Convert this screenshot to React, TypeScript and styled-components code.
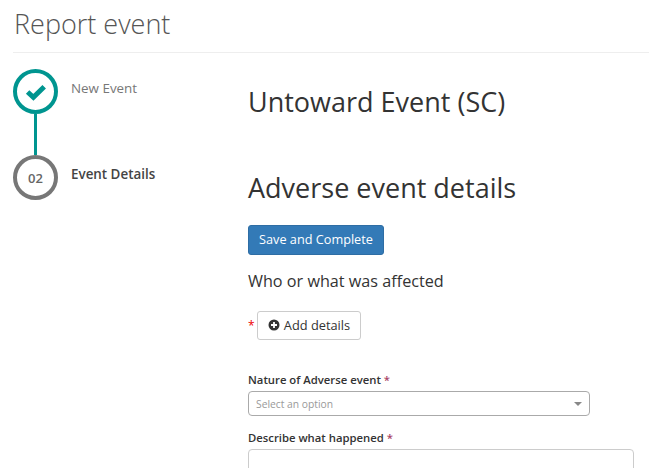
import React from "react"
import styled, { createGlobalStyle } from "styled-components"

const GlobalStyle = createGlobalStyle`
  html, body {
    margin: 0;
    padding: 0;
    height: 100%;
    overflow: hidden;
    background: #fff;
    font-family: "Open Sans", "Liberation Sans", sans-serif;
    color: #333;
  }
  * { box-sizing: border-box; }
`

const Page = styled.div`
  width: 649px;
  height: 468px;
  overflow: hidden;
  padding-left: 13px;
`

const PageHeader = styled.header`
  height: 53px;
  border-bottom: 1px solid #eee;
  padding: 6px 0 0 1px;
`

const PageTitle = styled.h1`
  margin: 0;
  font-size: 27px;
  line-height: 36px;
  font-weight: 300;
  color: #555;
`

const Body = styled.div`
  display: flex;
`

const Stepper = styled.ol`
  list-style: none;
  margin: 16px 0 0;
  padding: 0;
  width: 235px;
  flex: none;
`

const Step = styled.li`
  display: flex;
  gap: 13px;
`

const Track = styled.div`
  display: flex;
  flex-direction: column;
  align-items: center;
  width: 45px;
`

const Circle = styled.div<{ $done?: boolean }>`
  width: 45px;
  height: 45px;
  border-radius: 50%;
  border: 4px solid ${({ $done }) => ($done ? "#009590" : "#777")};
  color: ${({ $done }) => ($done ? "#009590" : "#666")};
  display: flex;
  align-items: center;
  justify-content: center;
  font-size: 13px;
  font-weight: 600;
`

const Connector = styled.div`
  width: 3px;
  height: 41px;
  background: #009590;
`

const StepLabel = styled.span<{ $active?: boolean }>`
  font-size: 13.4px;
  line-height: 20px;
  margin-top: 9px;
  font-weight: ${({ $active }) => ($active ? 600 : 400)};
  color: ${({ $active }) => ($active ? "#444" : "#777")};
`

const Main = styled.main`
  flex: 1;
  min-width: 0;
`

const EventTitle = styled.h2`
  margin: 31px 0 0;
  font-size: 27px;
  line-height: 36px;
  font-weight: 400;
  color: #333;
`

const SectionTitle = styled.h2`
  margin: 50px 0 0;
  font-size: 27px;
  line-height: 36px;
  font-weight: 400;
  color: #333;
`

const PrimaryButton = styled.button`
  display: block;
  margin-top: 19px;
  width: 136px;
  height: 30px;
  padding: 0 0 2px;
  background: #337ab7;
  border: 1px solid #2e6da4;
  border-radius: 3px;
  color: #fff;
  font: 400 12.7px "Open Sans", sans-serif;
`

const Subheading = styled.h3`
  margin: 14px 0 0;
  font-size: 16.2px;
  line-height: 24px;
  font-weight: 400;
  color: #333;
`

const RequiredRow = styled.div`
  display: flex;
  align-items: center;
  gap: 3px;
  margin-top: 18px;
`

const Asterisk = styled.span`
  color: #e00;
  font-size: 12px;
  width: 6px;
`

const DefaultButton = styled.button`
  display: flex;
  align-items: center;
  justify-content: center;
  gap: 4px;
  width: 104px;
  height: 29px;
  padding: 0 0 1px;
  background: #fff;
  border: 1px solid #ccc;
  border-radius: 3px;
  color: #333;
  font: 400 12.8px "Open Sans", sans-serif;
`

const Field = styled.div<{ $gap: number }>`
  margin-top: ${({ $gap }) => $gap}px;
`

const FieldLabel = styled.label`
  display: block;
  font-size: 11.3px;
  line-height: 16px;
  font-weight: 600;
  color: #333;
  margin-bottom: 3px;

  span {
    color: #a94466;
  }
`

const Select = styled.div`
  display: flex;
  align-items: center;
  justify-content: space-between;
  width: 342px;
  height: 25px;
  padding: 1px 7px 0;
  border: 1px solid #aaa;
  border-radius: 4px;
  font-size: 10.3px;
  color: #999;
`

const Caret = styled.i`
  width: 0;
  height: 0;
  border-left: 4px solid transparent;
  border-right: 4px solid transparent;
  border-top: 4px solid #888;
`

const TextArea = styled.div`
  width: 386px;
  height: 60px;
  border: 1px solid #ccc;
  border-radius: 4px;
`

const CheckIcon = () => (
  <svg width="22" height="18" viewBox="0 0 22 18">
    <path d="M2.6 9 L8.4 14.4 L19.2 3.8" fill="none" stroke="currentColor" strokeWidth="5" />
  </svg>
)

const PlusCircleIcon = () => (
  <svg width="12" height="12" viewBox="0 0 12 12">
    <circle cx="6" cy="6" r="5.5" fill="#333" />
    <path d="M6 3 V9 M3 6 H9" stroke="#fff" strokeWidth="1.8" />
  </svg>
)

export default function App() {
  return (
    <>
      <GlobalStyle />
      <Page>
        <PageHeader>
          <PageTitle>Report event</PageTitle>
        </PageHeader>
        <Body>
          <Stepper>
            <Step>
              <Track>
                <Circle $done>
                  <CheckIcon />
                </Circle>
                <Connector />
              </Track>
              <StepLabel>New Event</StepLabel>
            </Step>
            <Step>
              <Track>
                <Circle>02</Circle>
              </Track>
              <StepLabel $active>Event Details</StepLabel>
            </Step>
          </Stepper>
          <Main>
            <EventTitle>Untoward Event (SC)</EventTitle>
            <SectionTitle>Adverse event details</SectionTitle>
            <PrimaryButton>Save and Complete</PrimaryButton>
            <Subheading>Who or what was affected</Subheading>
            <RequiredRow>
              <Asterisk>*</Asterisk>
              <DefaultButton>
                <PlusCircleIcon />
                Add details
              </DefaultButton>
            </RequiredRow>
            <Field $gap={32}>
              <FieldLabel>
                Nature of Adverse event <span>*</span>
              </FieldLabel>
              <Select>
                Select an option
                <Caret />
              </Select>
            </Field>
            <Field $gap={14}>
              <FieldLabel>
                Describe what happened <span>*</span>
              </FieldLabel>
              <TextArea />
            </Field>
          </Main>
        </Body>
      </Page>
    </>
  )
}
